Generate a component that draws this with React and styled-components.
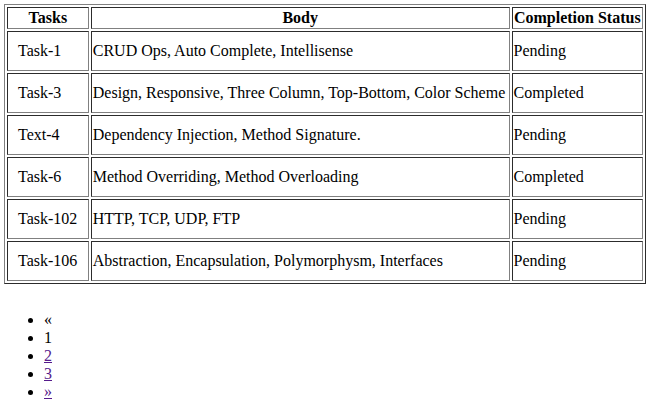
import React from "react";
import styled, { createGlobalStyle } from "styled-components";

const Global = createGlobalStyle`
  html, body { background: #ffffff; }
  body {
    margin: 4px;
    font-family: "Liberation Serif", "Times New Roman", serif;
    font-size: 16px;
    color: #000000;
  }
`;

const Table = styled.table`
  width: 642px;
  border-collapse: separate;
  border-spacing: 2px;
  border: 1px outset #808080;
  font-family: inherit;
  font-size: 16px;
  white-space: nowrap;
`;

const HeadCell = styled.th`
  border: 1px inset #808080;
  padding: 1px;
  font-weight: bold;
  text-align: center;
  vertical-align: middle;
`;

const Cell = styled.td`
  border: 1px inset #808080;
  padding: ${(p) => (p.$roomy ? "10px" : "1px")};
  vertical-align: middle;
  text-align: left;
`;

const Pager = styled.ul`
  margin: 27px 0 0;
  padding-left: 40px;
  list-style: disc;
`;

const PageItem = styled.li`
  line-height: normal;
`;

const PageLink = styled.a`
  color: #551a8b;
  text-decoration: underline;
  cursor: pointer;
`;

const rows = [
  ["Task-1", "CRUD Ops, Auto Complete, Intellisense", "Pending"],
  ["Task-3", "Design, Responsive, Three Column, Top-Bottom, Color Scheme", "Completed"],
  ["Text-4", "Dependency Injection, Method Signature.", "Pending"],
  ["Task-6", "Method Overriding, Method Overloading", "Completed"],
  ["Task-102", "HTTP, TCP, UDP, FTP", "Pending"],
  ["Task-106", "Abstraction, Encapsulation, Polymorphysm, Interfaces", "Pending"],
];

export default function App() {
  return (
    <>
      <Global />
      <Table>
        <thead>
          <tr>
            <HeadCell>Tasks</HeadCell>
            <HeadCell>Body</HeadCell>
            <HeadCell>Completion Status</HeadCell>
          </tr>
        </thead>
        <tbody>
          {rows.map(([task, body, status]) => (
            <tr key={task}>
              <Cell $roomy>{task}</Cell>
              <Cell>{body}</Cell>
              <Cell>{status}</Cell>
            </tr>
          ))}
        </tbody>
      </Table>
      <Pager>
        <PageItem>«</PageItem>
        <PageItem>1</PageItem>
        <PageItem>
          <PageLink href="#">2</PageLink>
        </PageItem>
        <PageItem>
          <PageLink href="#">3</PageLink>
        </PageItem>
        <PageItem>
          <PageLink href="#">»</PageLink>
        </PageItem>
      </Pager>
    </>
  );
}
